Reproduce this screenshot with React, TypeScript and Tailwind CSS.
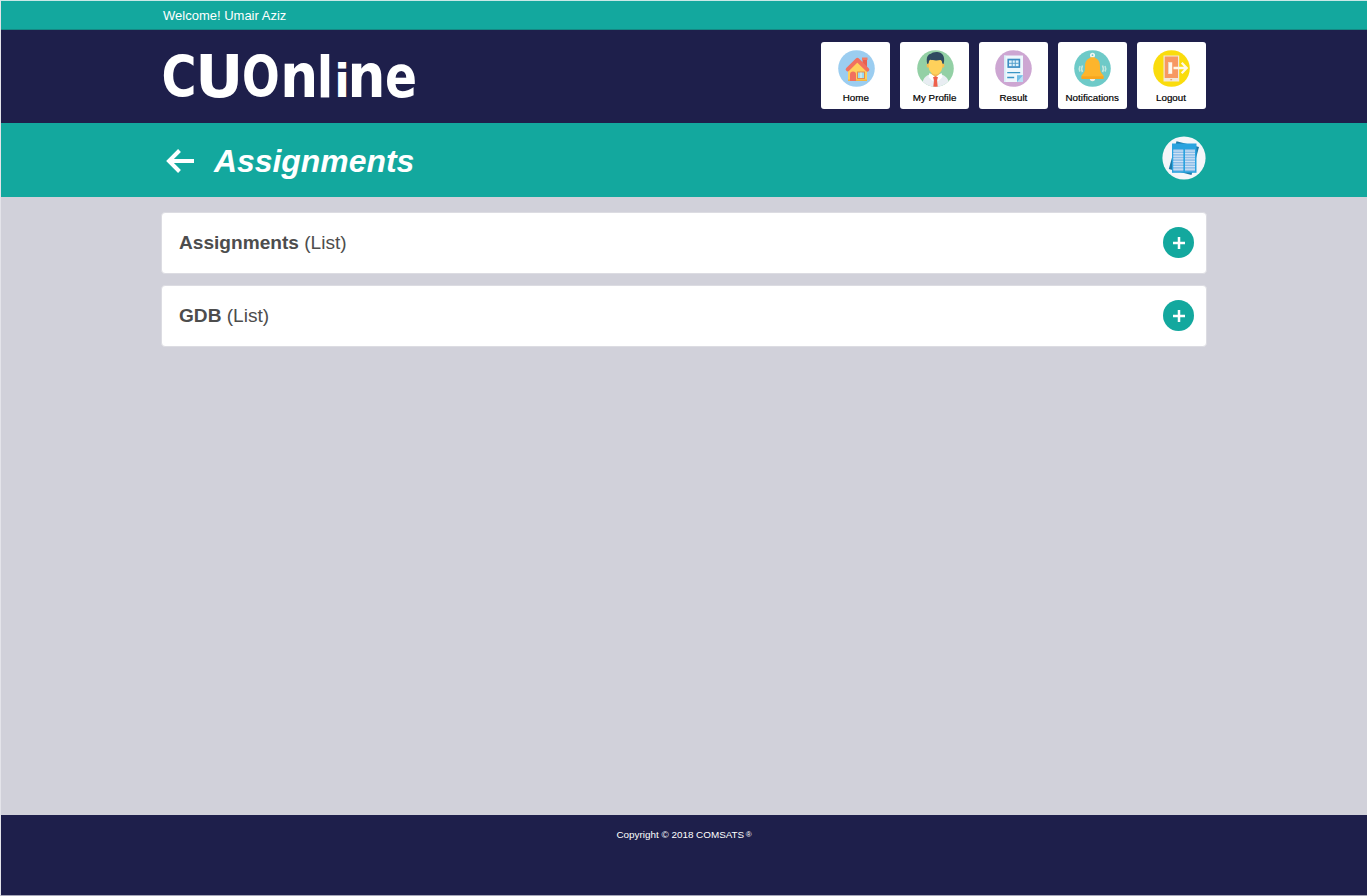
import React from "react";

const letters = [
  { char: "C", size: 57.5, at: "translate(161.5 97) scale(0.83 1)" },
  { char: "U", size: 58, at: "translate(195.3 97) scale(1.02 1)" },
  { char: "O", size: 57.5, at: "translate(242 97) scale(0.77 1)" },
  { char: "n", size: 60.5, at: "translate(280.3 97) scale(0.88 1)" },
  { char: "l", size: 56.5, at: "translate(316.8 97) scale(0.85 1)" },
  { char: "i", size: 45.5, at: "translate(334.2 97) scale(1 1)" },
  { char: "n", size: 60.5, at: "translate(347.6 97) scale(0.88 1)" },
  { char: "e", size: 59, at: "translate(385 96.7) scale(0.8 1)" },
];

function Wordmark() {
  return (
    <svg viewBox="160 36 264 80" className="-ml-[2px] block h-[80px] w-[264px] overflow-visible" aria-label="CUOnline">
      <g fill="#ffffff" fontFamily="'DejaVu Sans', sans-serif" fontWeight="700">
        {letters.map(({ char, size, at }, index) => (
          <text key={index} fontSize={size} transform={at}>{char}</text>
        ))}
      </g>
    </svg>
  );
}

function HomeIcon() {
  return (
    <svg viewBox="0 0 37 37" className="size-[37px]">
      <circle cx="18.5" cy="18.5" r="18.3" fill="#9bcdf0" />
      <path d="M24.5 8H29v9h-4.5z" fill="#e85f50" />
      <path d="M24 7.5h5.5V10H24z" fill="#f17b65" />
      <path d="M10 18 19 10l10 9v12H10z" fill="#ffd05b" />
      <path d="M10 29.5h19V31H10z" fill="#f5b53f" />
      <path d="M12 31v-6.5a3 3 0 0 1 6 0V31z" fill="#f1705f" />
      <path d="M19 21.5h8V29h-8z" fill="#e38b52" />
      <path d="M20 22.5h6V28h-6z" fill="#9bdcf2" />
      <path d="M23 22.5V28" stroke="#f4f4ef" strokeWidth="1" />
      <path d="m9.7 19.4 9.6-9.6 10 9.8" fill="none" stroke="#f1705f" strokeWidth="4" strokeLinejoin="round" strokeLinecap="round" />
    </svg>
  );
}

function ProfileIcon() {
  return (
    <svg viewBox="0 0 37 37" className="size-[37px]">
      <defs>
        <clipPath id="profile-circle"><circle cx="18.5" cy="18.5" r="18.3" /></clipPath>
      </defs>
      <g clipPath="url(#profile-circle)">
        <path d="M0 0h37v37H0z" fill="#93d0a5" />
        <path d="M5 37c.3-8 3-11.5 9-13h9c6 1.5 9 5 10 13z" fill="#e8edf2" />
        <path d="M14.5 20h8v4.500L18.5 29l-4-4.500z" fill="#f3b952" />
        <path d="m18.5 27-6-4-1 4 4 4zM18.5 27l6-4 1 4-4 4z" fill="#ffffff" />
        <path d="m16 27.2 2.5-1 2.5 1-1 3 .9 8h-4.8l.9-8z" fill="#ee604b" />
      </g>
      <ellipse cx="11" cy="15.5" rx="1.4" ry="2.3" fill="#f5bd50" />
      <ellipse cx="26" cy="15.5" rx="1.4" ry="2.3" fill="#f5bd50" />
      <path d="M11.8 8h13.4v9.5c0 4-3.8 7-6.7 7s-6.7-3-6.7-7z" fill="#ffd15b" />
      <path d="M10.2 14C8.8 7 11 4.200 14.1 3.7 15.8 1.3 25 .5 26.7 6.7c.8 2.5.4 4.800-.1 7.300l-1.4-.7c0-2-.8-3.2-2-3.3-3.8.8-7.8.2-9.8-.2-1.3.5-1.6 1.8-1.8 3.5z" fill="#2f4b61" />
    </svg>
  );
}

function ResultIcon() {
  return (
    <svg viewBox="0 0 37 37" className="size-[37px]">
      <circle cx="18.5" cy="18.5" r="18.3" fill="#cda6d2" />
      <path d="M9 5.5h19V32H9z" fill="#edf7fc" />
      <path d="M9 5.5h1.7V32H9z" fill="#d8ecf7" />
      <path d="M12.4 8.7h12.8v9.2H12.4z" fill="#3c8dc2" />
      <path d="M14 10.4h9.6v5.8H14z" fill="#dff2fb" />
      <path d="M17.2 10v6.5M20.3 10v6.5M13.8 13.3h10" stroke="#4d9bc9" strokeWidth=".9" />
      <path d="M12.2 22.6h13M12.2 27.5h7" stroke="#3995c5" strokeWidth="1.4" />
      <path d="M22 25.3h6V32h-6z" fill="#b8e0f4" />
      <path d="M22 25.3h6L22 32z" fill="#72bee6" />
    </svg>
  );
}

function BellIcon() {
  return (
    <svg viewBox="0 0 37 37" className="size-[37px]">
      <circle cx="18.5" cy="18.5" r="18.3" fill="#6ecac8" />
      <circle cx="18.5" cy="5.2" r="1.7" fill="none" stroke="#f2f4f1" strokeWidth="1.7" />
      <path d="M15.8 28.5h5.4a2.7 2.7 0 0 1-5.4 0z" fill="#f6efe2" />
      <path d="M15 8.5c1-1.8 6-1.8 7 0 3 1.5 4 4 4 8.5 0 4 .3 5 3.5 8.5V28h-22v-2.5C10.7 22 11 21 11 17c0-4.5 1-7 4-8.5z" fill="#fdb52c" />
      <path d="M7.5 26.3h22V29h-22z" fill="#f7a51f" />
      <path d="M8.5 15.500c-1 2-1 4.700 0 6.500M6 16c-1 2-1 3.700 0 5.500M28.500 15.500c1 2 1 4.700 0 6.500M31 16c1 2 1 3.700 0 5.500" fill="none" stroke="#c3e7df" strokeWidth="1.6" />
    </svg>
  );
}

function LogoutIcon() {
  return (
    <svg viewBox="0 0 37 37" className="size-[37px]">
      <circle cx="18.5" cy="18.5" r="18.3" fill="#fadc0d" />
      <path d="M10.5 5.500h15.700v26H10.500z" fill="#f1e9d9" />
      <path d="M11.700 6.500h13.300V28H11.700z" fill="#f79862" />
      <path d="M15 12.300h4.200v11.500H15z" fill="#fff9ef" />
      <path d="M15 12.300h1v11.500h-1z" fill="#e9d7c7" />
      <path d="M17.300 29h1.800v1.300h-1.800z" fill="#e1a57d" />
      <path d="M20.500 18h12.500M28.700 12.700l5 5.300-5 5.300" fill="none" stroke="#fff8e7" strokeWidth="2.3" />
    </svg>
  );
}

function SheetsIcon() {
  const lines = [15, 17.6, 20.2, 22.8, 25.4, 28, 30.6, 33.2];
  return (
    <svg viewBox="0 0 44 44" className="size-[44px]">
      <circle cx="22" cy="22" r="21.6" fill="#f4f6f9" />
      <path d="M14.5 5.3 37 11l-7.5 28L6.8 33z" fill="#1c7ba9" />
      <path d="M10 7.500h24.500v29.300H10z" fill="#2aa3df" />
      <path d="M11.300 13.300h10v22h-10zM23 13.300h10v22H23z" fill="#8dbde8" />
      {lines.map((y) => (
        <path key={y} d={`M11.3 ${y}h10M23 ${y}h10`} stroke="#d7e7f6" strokeWidth="1" />
      ))}
    </svg>
  );
}

const navigation = [
  { label: "Home", Icon: HomeIcon },
  { label: "My Profile", Icon: ProfileIcon },
  { label: "Result", Icon: ResultIcon },
  { label: "Notifications", Icon: BellIcon },
  { label: "Logout", Icon: LogoutIcon },
];

function ListPanel({ title }: { title: string }) {
  return (
    <section className="flex h-[62px] items-center justify-between rounded-[4px] border border-[#dcdce2] bg-white pr-[12px] pl-[17px]">
      <h2 className="text-[19.1px] leading-6 text-[#4d4d4d]">
        <strong className="font-bold">{title}</strong> (List)
      </h2>
      <button className="-mt-px flex size-[31px] items-center justify-center rounded-full bg-[#13a89e]" aria-label="Expand">
        <svg viewBox="0 0 12 12" className="size-3">
          <path d="M6 0v12M0 6h12" stroke="#ffffff" strokeWidth="2.5" />
        </svg>
      </button>
    </section>
  );
}

export default function App() {
  return (
    <div className="flex h-[896px] w-[1367px] flex-col overflow-hidden border-t border-b border-l border-t-[#c9e8e7] border-b-[#a5a5b7] border-l-[#e4e4ea] bg-[#d1d1da] font-['Liberation_Sans',Arial,sans-serif]">
      <div className="h-[29px] shrink-0 border-b border-[#168783] bg-[#13a89e] pt-[1px] pl-[162px] text-[13px] leading-[27px] text-white">
        Welcome! Umair Aziz
      </div>
      <header className="flex h-[93px] shrink-0 items-start justify-between bg-[#1e1f4b] pr-[161.5px] pl-[161px]">
        <div className="pt-[6px]"><Wordmark /></div>
        <nav className="flex gap-[9.8px] pt-[12.4px]">
          {navigation.map(({ label, Icon }) => (
            <a key={label} className="flex h-[66.6px] w-[69px] flex-col items-center rounded-[3px] bg-white pt-[7.5px]">
              <span className="ml-[1px]"><Icon /></span>
              <span className="mt-[5px] text-[9.8px] leading-[12px] whitespace-nowrap text-black [-webkit-text-stroke:0.2px_black]">{label}</span>
            </a>
          ))}
        </nav>
      </header>
      <div className="flex h-[74px] shrink-0 items-center justify-between bg-[#13a89e] pr-[161px] pl-[164px]">
        <div className="flex items-center">
          <svg viewBox="0 0 30 26" className="mt-[1px] h-[26px] w-[30px]">
            <path d="M29 13H4M14.5 2.5 4 13l10.5 10.5" fill="none" stroke="#ffffff" strokeWidth="4" />
          </svg>
          <h1 className="mt-[2px] ml-[19px] text-[31.9px] leading-[36px] font-bold text-white italic">Assignments</h1>
        </div>
        <span className="mb-[4px]"><SheetsIcon /></span>
      </div>
      <main className="flex grow flex-col gap-[11px] pt-[15px] pr-[160px] pl-[160px]">
        <ListPanel title="Assignments" />
        <ListPanel title="GDB" />
      </main>
      <footer className="h-[80px] shrink-0 bg-[#1e1f4b] pt-[13px] text-center text-[9.9px] leading-[14px] text-white">
        Copyright © 2018 COMSATS<span className="relative -top-[1px] ml-[1.5px] text-[8px]">®</span>
      </footer>
    </div>
  );
}
